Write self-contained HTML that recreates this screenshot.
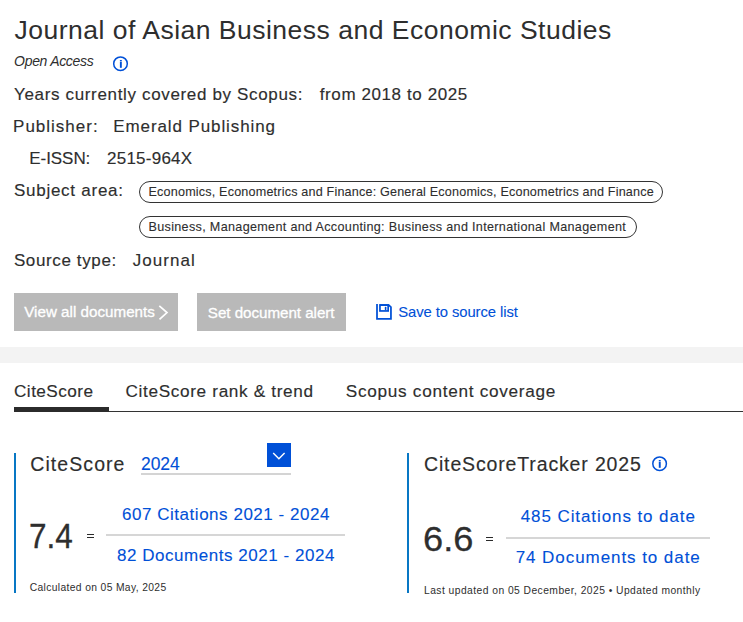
<!DOCTYPE html>
<html><head><meta charset="utf-8">
<style>
html,body{margin:0;padding:0;background:#fff;width:743px;height:622px;overflow:hidden;position:relative;}
.t{position:absolute;white-space:nowrap;line-height:1;font-family:"Liberation Sans",sans-serif;}
.b{position:absolute;}
</style></head><body>
<svg class="b" style="left:111px;top:54px" width="20" height="20" viewBox="0 0 20 20">
 <circle cx="9.5" cy="9.7" r="6.8" fill="none" stroke="#0050d7" stroke-width="1.5"/>
 <rect x="8.9" y="6" width="1.9" height="1.1" fill="#0050d7"/>
 <rect x="8.9" y="7.6" width="1.9" height="6.2" fill="#0050d7"/>
</svg>
<div class="b" style="left:139px;top:181px;width:522px;height:20px;border:1px solid #333;border-radius:11px;"></div>
<div class="b" style="left:139px;top:216px;width:495.5px;height:20px;border:1px solid #333;border-radius:11px;"></div>
<div class="b" style="left:14px;top:293px;width:164px;height:38px;background:#b9b9b9;"></div>
<div class="b" style="left:197px;top:293px;width:148.5px;height:38px;background:#b9b9b9;"></div>
<svg class="b" style="left:156px;top:303px" width="14" height="18" viewBox="0 0 14 18">
 <polyline points="3.3,2.8 11,9.6 3.5,16.4" fill="none" stroke="#fff" stroke-width="1.7"/>
</svg>
<svg class="b" style="left:376px;top:304px" width="16" height="16" viewBox="0 0 16 16">
 <path d="M1,0.1 V14.95 H14.95 V3.1 L12.8,1 H4" fill="none" stroke="#0050d7" stroke-width="1.75" stroke-linejoin="miter"/>
 <rect x="3.95" y="0.95" width="8.2" height="6.0" fill="none" stroke="#0050d7" stroke-width="1.7"/>
 <rect x="8.8" y="2.7" width="1.6" height="3.5" rx="0.7" fill="#0050d7"/>
</svg>
<div class="b" style="left:0;top:347px;width:743px;height:16px;background:#f3f3f3;"></div>
<div class="b" style="left:14px;top:411px;width:729px;height:1px;background:#333;"></div>
<div class="b" style="left:14px;top:407px;width:95px;height:4.5px;background:#2b2b2b;"></div>
<div class="b" style="left:14px;top:453px;width:2px;height:140px;background:#0877c4;"></div>
<div class="b" style="left:141px;top:473px;width:150px;height:2px;background:#d4d4d4;"></div>
<div class="b" style="left:267px;top:443px;width:24px;height:24px;background:#0050d7;"></div>
<svg class="b" style="left:267px;top:443px" width="24" height="24" viewBox="0 0 24 24">
 <polyline points="6.2,10 11.9,15.8 17.6,10" fill="none" stroke="#fff" stroke-width="1.4"/>
</svg>
<div class="b" style="left:106px;top:534px;width:239px;height:2px;background:#d6d6d6;"></div>
<div class="b" style="left:87px;top:534px;width:7px;height:1px;background:#2a2a2a;"></div>
<div class="b" style="left:87px;top:537px;width:7px;height:1px;background:#2a2a2a;"></div>
<div class="b" style="left:407px;top:453px;width:2px;height:140px;background:#0877c4;"></div>
<svg class="b" style="left:649px;top:454px" width="20" height="20" viewBox="0 0 20 20">
 <circle cx="10.6" cy="9.7" r="6.8" fill="none" stroke="#0050d7" stroke-width="1.5"/>
 <rect x="9.8" y="6" width="1.9" height="1.1" fill="#0050d7"/>
 <rect x="9.8" y="7.6" width="1.9" height="6.2" fill="#0050d7"/>
</svg>
<div class="b" style="left:506px;top:537px;width:204px;height:2px;background:#d6d6d6;"></div>
<div class="b" style="left:486px;top:537px;width:7px;height:1px;background:#2a2a2a;"></div>
<div class="b" style="left:486px;top:540px;width:7px;height:1px;background:#2a2a2a;"></div>
<div class="t" style="left:14.50px;top:16.60px;font-size:26.5px;letter-spacing:0.495px;color:#2e2e2e;">Journal of Asian Business and Economic Studies</div>
<div class="t" style="left:14.10px;top:53.80px;font-size:14px;letter-spacing:-0.316px;color:#2e2e2e;font-style:italic;">Open Access</div>
<div class="t" style="left:14.00px;top:86.00px;font-size:17px;letter-spacing:0.656px;color:#2e2e2e;-webkit-text-stroke:0.15px #2e2e2e;">Years currently covered by Scopus:</div>
<div class="t" style="left:319.80px;top:86.00px;font-size:17px;letter-spacing:0.592px;color:#2e2e2e;-webkit-text-stroke:0.15px #2e2e2e;">from 2018 to 2025</div>
<div class="t" style="left:13.10px;top:117.90px;font-size:17px;letter-spacing:0.992px;color:#2e2e2e;-webkit-text-stroke:0.15px #2e2e2e;">Publisher:</div>
<div class="t" style="left:113.30px;top:117.90px;font-size:17px;letter-spacing:0.893px;color:#2e2e2e;-webkit-text-stroke:0.15px #2e2e2e;">Emerald Publishing</div>
<div class="t" style="left:29.30px;top:149.90px;font-size:17px;letter-spacing:-0.063px;color:#2e2e2e;-webkit-text-stroke:0.15px #2e2e2e;">E-ISSN:</div>
<div class="t" style="left:107.00px;top:149.90px;font-size:17px;letter-spacing:0.245px;color:#2e2e2e;-webkit-text-stroke:0.15px #2e2e2e;">2515-964X</div>
<div class="t" style="left:13.90px;top:182.30px;font-size:17px;letter-spacing:0.746px;color:#2e2e2e;-webkit-text-stroke:0.15px #2e2e2e;">Subject area:</div>
<div class="t" style="left:148.50px;top:185.90px;font-size:12.6px;letter-spacing:0.184px;color:#2e2e2e;-webkit-text-stroke:0.1px #2e2e2e;">Economics, Econometrics and Finance: General Economics, Econometrics and Finance</div>
<div class="t" style="left:148.50px;top:220.90px;font-size:12.6px;letter-spacing:0.324px;color:#2e2e2e;-webkit-text-stroke:0.1px #2e2e2e;">Business, Management and Accounting: Business and International Management</div>
<div class="t" style="left:13.90px;top:252.30px;font-size:17px;letter-spacing:0.626px;color:#2e2e2e;-webkit-text-stroke:0.15px #2e2e2e;">Source type:</div>
<div class="t" style="left:132.70px;top:252.30px;font-size:17px;letter-spacing:1.053px;color:#2e2e2e;-webkit-text-stroke:0.15px #2e2e2e;">Journal</div>
<div class="t" style="left:24.20px;top:304.10px;font-size:15.2px;letter-spacing:0.007px;color:#ffffff;-webkit-text-stroke:0.3px #ffffff;">View all documents</div>
<div class="t" style="left:207.80px;top:304.90px;font-size:15.2px;letter-spacing:-0.045px;color:#ffffff;-webkit-text-stroke:0.3px #ffffff;">Set document alert</div>
<div class="t" style="left:398.20px;top:305.20px;font-size:14.8px;letter-spacing:-0.069px;color:#0050d7;-webkit-text-stroke:0.1px #0050d7;">Save to source list</div>
<div class="t" style="left:14.00px;top:383.00px;font-size:17.2px;letter-spacing:0.449px;color:#2e2e2e;-webkit-text-stroke:0.15px #2e2e2e;">CiteScore</div>
<div class="t" style="left:125.50px;top:383.00px;font-size:17.2px;letter-spacing:0.652px;color:#2e2e2e;-webkit-text-stroke:0.15px #2e2e2e;">CiteScore rank &amp; trend</div>
<div class="t" style="left:345.80px;top:383.00px;font-size:17.2px;letter-spacing:0.709px;color:#2e2e2e;-webkit-text-stroke:0.15px #2e2e2e;">Scopus content coverage</div>
<div class="t" style="left:30.30px;top:454.70px;font-size:19.5px;letter-spacing:1.066px;color:#2e2e2e;-webkit-text-stroke:0.15px #2e2e2e;">CiteScore</div>
<div class="t" style="left:141.00px;top:456.20px;font-size:17.5px;letter-spacing:-0.066px;color:#0050d7;-webkit-text-stroke:0.1px #0050d7;">2024</div>
<div class="t" style="left:29.30px;top:517.60px;font-size:35px;transform:scaleX(0.9006);transform-origin:0 0;color:#2e2e2e;-webkit-text-stroke:0.3px #2e2e2e;">7.4</div>
<div class="t" style="left:122.00px;top:505.80px;font-size:17px;letter-spacing:0.532px;color:#0050d7;-webkit-text-stroke:0.1px #0050d7;">607 Citations 2021 - 2024</div>
<div class="t" style="left:117.00px;top:546.60px;font-size:17px;letter-spacing:0.538px;color:#0050d7;-webkit-text-stroke:0.1px #0050d7;">82 Documents 2021 - 2024</div>
<div class="t" style="left:29.70px;top:583.20px;font-size:10.3px;letter-spacing:0.359px;color:#2e2e2e;">Calculated on 05 May, 2025</div>
<div class="t" style="left:424.00px;top:454.70px;font-size:19.5px;letter-spacing:0.853px;color:#2e2e2e;-webkit-text-stroke:0.15px #2e2e2e;">CiteScoreTracker 2025</div>
<div class="t" style="left:423.17px;top:520.50px;font-size:35px;transform:scaleX(1.0349);transform-origin:0 0;color:#2e2e2e;-webkit-text-stroke:0.3px #2e2e2e;">6.6</div>
<div class="t" style="left:520.70px;top:508.20px;font-size:17px;letter-spacing:0.916px;color:#0050d7;-webkit-text-stroke:0.1px #0050d7;">485 Citations to date</div>
<div class="t" style="left:515.70px;top:549.10px;font-size:17px;letter-spacing:0.933px;color:#0050d7;-webkit-text-stroke:0.1px #0050d7;">74 Documents to date</div>
<div class="t" style="left:424.00px;top:586.40px;font-size:10.3px;letter-spacing:0.448px;color:#2e2e2e;">Last updated on 05 December, 2025 • Updated monthly</div>
</body></html>
